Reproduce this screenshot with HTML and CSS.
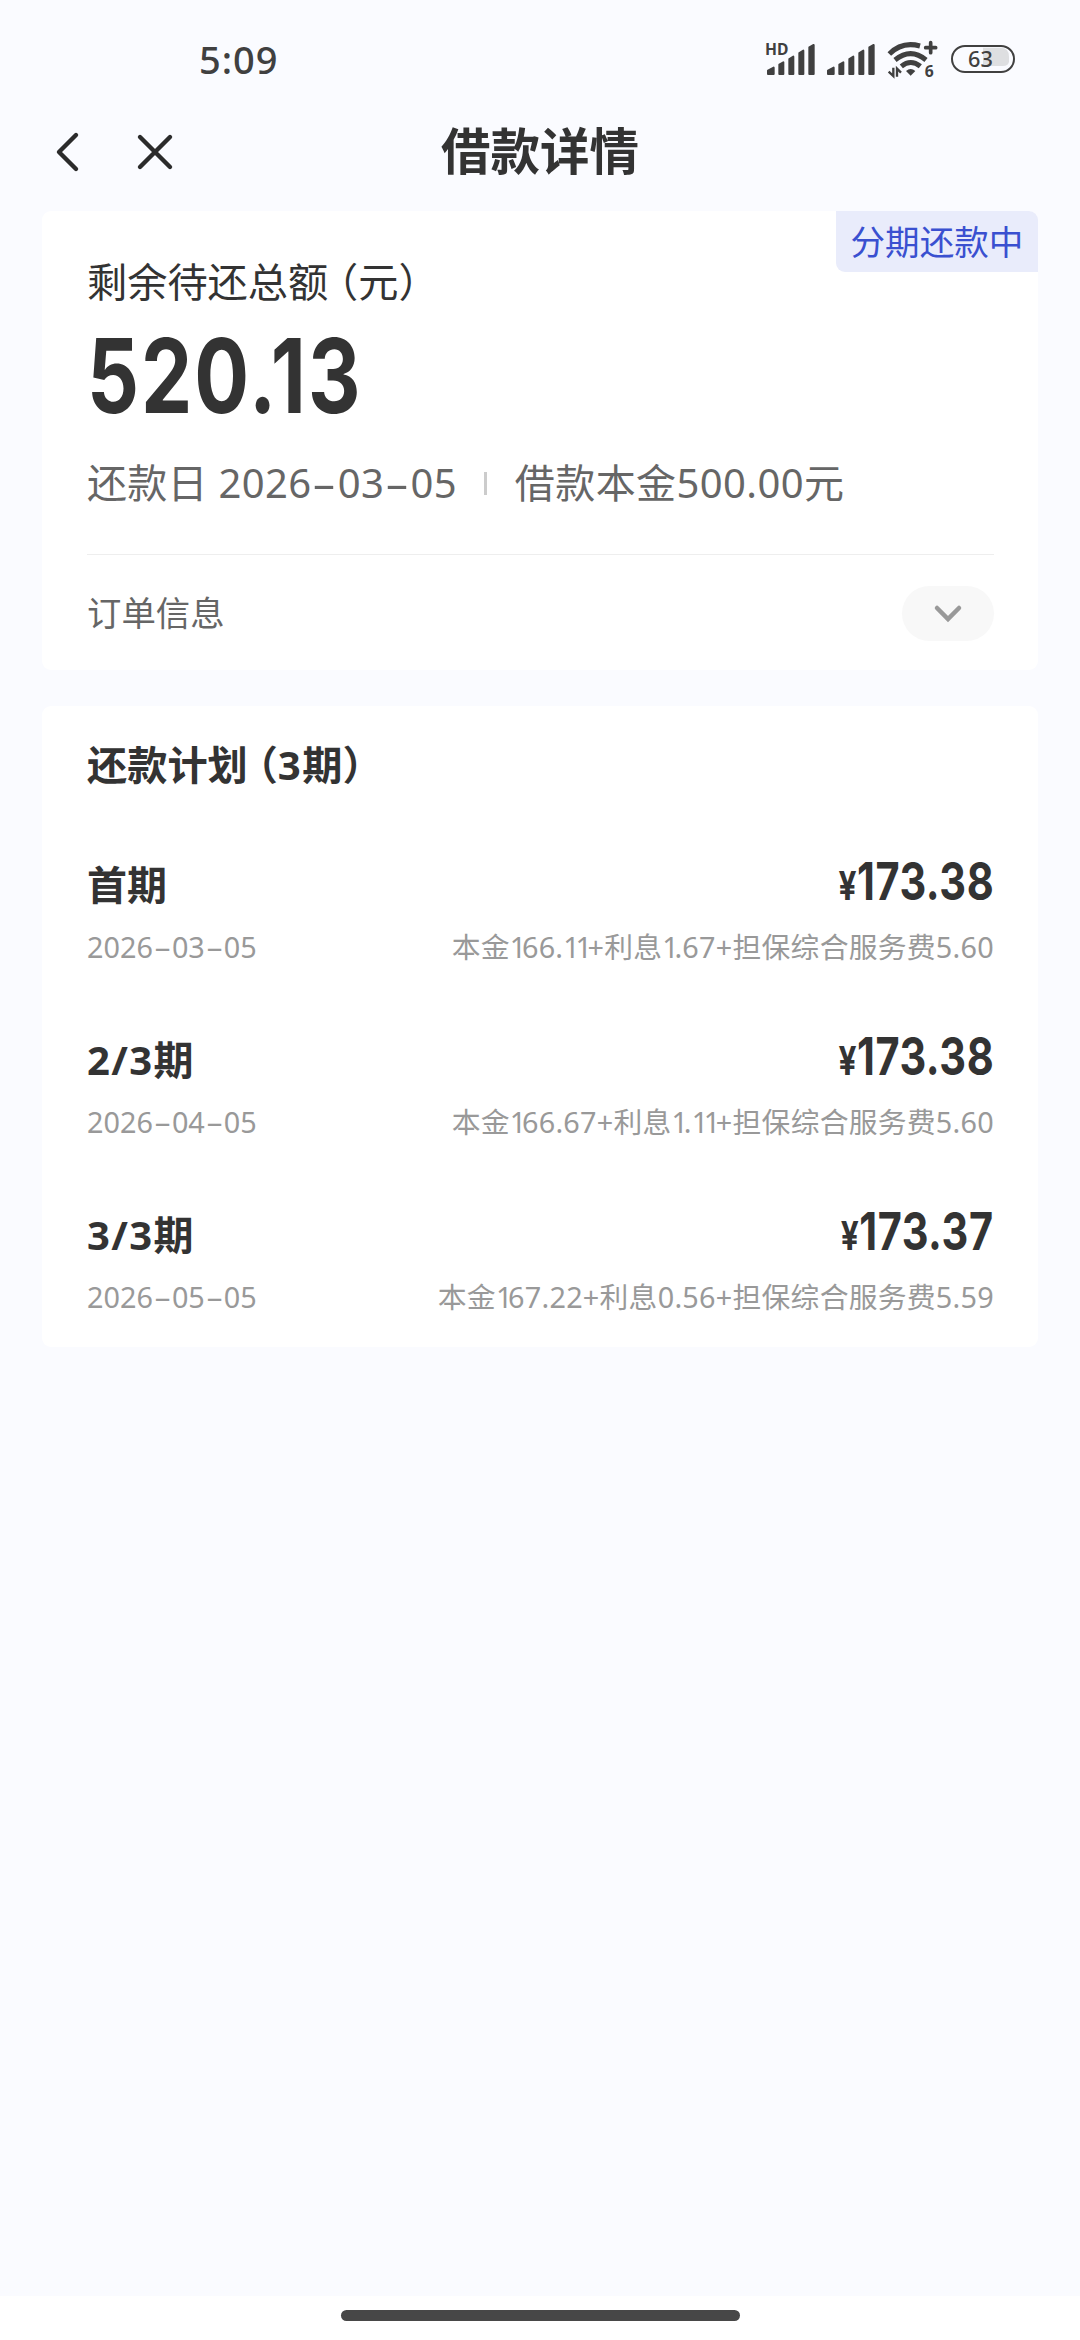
FILE: index.html
```html
<!DOCTYPE html>
<html lang="zh-CN">
<head>
<meta charset="utf-8">
<title>借款详情</title>
<link rel="stylesheet" href="styles.css">
</head>
<body>
<header class="status">
  <span class="clock">5:09</span>
  <div class="status-icons">
    <svg class="sig1" viewBox="75 60 150 120">
      <text x="75" y="105" class="hd">HD</text>
      <g class="bars"><path d="M84 152 101 143V162H84Z"/><path d="M118 134 130 127V162H118Z"/><path d="M148 117 160 110V162H148Z"/><path d="M178 99 190 92V162H178Z"/><path d="M208 82 221 75V162H208Z"/></g>
    </svg>
    <svg class="sig2" viewBox="261 60 144 120">
      <g class="bars"><path d="M264 152 281 143V162H264Z"/><path d="M298 134 310 127V162H298Z"/><path d="M328 117 340 110V162H328Z"/><path d="M358 99 370 92V162H358Z"/><path d="M388 82 401 75V162H388Z"/></g>
    </svg>
    <svg class="wifi" viewBox="444 60 150 120">
      <g class="arcs"><path d="M448 102Q486 63 540 78"/><path d="M465 120Q512 82 558 120"/><path d="M484 139Q512 116 541 139"/></g>
      <path d="M498 153Q512 141 526 153L512 167Z" class="solid"/>
      <path d="M572 68V98M557 83H587" class="plus"/>
      <path d="M460 143V168L446 155M471 170V146L483 158" class="updown"/>
      <text x="554" y="170" class="gen">6</text>
    </svg>
    <svg class="battery" viewBox="633 60 192 120">
      <path d="M729 83H781Q807 83 807 110V124Q807 138 788 138H729Z" class="level"/>
      <rect x="636" y="78" width="186" height="78" rx="39" class="case"/>
      <text x="684" y="142" class="pct">63</text>
    </svg>
  </div>
</header>
<nav class="nav">
  <div class="nav-icons">
    <svg class="back" viewBox="0 0 24 40"><path d="M21 3 4 20 21 37"/></svg>
    <svg class="close" viewBox="0 0 36 36"><path d="M3 3 33 33M33 3 3 33"/></svg>
  </div>
  <h1>借款详情</h1>
</nav>
<main>
  <section class="card summary">
    <span class="tag">分期还款中</span>
    <p class="label">剩余待还总额<span class="pl">（</span>元）</p>
    <p class="total"><span class="num">520.13</span></p>
    <p class="meta"><span class="due">还款日 2026<b class="dash">-</b>03<b class="dash">-</b>05</span><i class="sep"></i><span class="principal">借款本金500.00元</span></p>
    <div class="order">
      <span class="order-label">订单信息</span>
      <span class="pill"><svg viewBox="0 0 30 20"><path d="M4 4 15 15 26 4"/></svg></span>
    </div>
  </section>
  <section class="card plan">
    <h2>还款计划<span class="pl">（</span><span class="count">3</span>期）</h2>
    <article class="item">
      <div class="top"><h3>首期</h3><span class="num"><small>¥</small>173.38</span></div>
      <div class="sub"><span>2026<b class="dash">-</b>03<b class="dash">-</b>05</span><span class="detail">本金<i>1</i>66.<i>11</i>+利息<i>1</i>.67+担保综合服务费5.60</span></div>
    </article>
    <article class="item">
      <div class="top"><h3><span class="count">2/3</span>期</h3><span class="num"><small>¥</small>173.38</span></div>
      <div class="sub"><span>2026<b class="dash">-</b>04<b class="dash">-</b>05</span><span class="detail">本金<i>1</i>66.67+利息<i>1</i>.<i>11</i>+担保综合服务费5.60</span></div>
    </article>
    <article class="item">
      <div class="top"><h3><span class="count">3/3</span>期</h3><span class="num"><small>¥</small>173.37</span></div>
      <div class="sub"><span>2026<b class="dash">-</b>05<b class="dash">-</b>05</span><span class="detail">本金<i>1</i>67.22+利息0.56+担保综合服务费5.59</span></div>
    </article>
  </section>
</main>
<footer class="home"><span></span></footer>
</body>
</html>
```

FILE: styles.css
```css
* { box-sizing: border-box; margin: 0; padding: 0; }
body {
  width: 1080px; height: 2340px; overflow: hidden;
  display: flex; flex-direction: column;
  background: #fafbff; color: #333;
  font-family: "Noto Sans", "Noto Sans CJK SC", sans-serif;
}
svg { display: block; overflow: visible; }
.status { height: 120px; padding: 0 65px 0 199px; display: flex; justify-content: space-between; align-items: center; }
.clock { font-size: 38px; font-weight: 500; letter-spacing: 1px; line-height: 40px; color: #404040; padding-bottom: 3px; }
.status-icons { display: flex; height: 40px; fill: #404040; }
.status-icons svg { height: 40px; }
.sig1 { width: 50px; margin-right: 12px; }
.sig2 { width: 48px; margin-right: 13px; }
.wifi { width: 50px; margin-right: 13px; }
.battery { width: 64px; }
.bars { stroke: #404040; stroke-width: 6; stroke-linejoin: round; }
.hd { font: 700 47px "Noto Sans", sans-serif; }
.gen { font: 700 47px "Noto Sans", sans-serif; }
.pct { font: 500 65px "Noto Sans", sans-serif; }
.arcs { fill: none; stroke: #404040; stroke-width: 15; }
.plus { fill: none; stroke: #404040; stroke-width: 11; stroke-linecap: round; }
.updown { fill: none; stroke: #404040; stroke-width: 7; }
.level { fill: #dedfe1; }
.case { fill: none; stroke: #404040; stroke-width: 6; }

.nav { height: 91px; display: grid; grid-template-columns: 1fr auto 1fr; align-items: start; }
.nav-icons { display: flex; align-items: center; height: 63px; padding-left: 55px; gap: 58px; }
.nav-icons svg { fill: none; stroke: #2b2b2b; stroke-width: 4.4; stroke-linecap: round; stroke-linejoin: round; }
.back { width: 24px; height: 40px; }
.close { width: 36px; height: 36px; }
h1 { font-size: 49.5px; line-height: 62px; font-weight: 700; }

main { flex: 1; padding: 0 42px; display: flex; flex-direction: column; gap: 36px; }
.card { background: #fff; border-radius: 9px; padding: 0 44px 0 45px; position: relative; }
.summary { height: 459px; }
.tag {
  position: absolute; top: 0; right: 0; width: 202px; height: 61px;
  border-radius: 0 9px 0 9px; background: #e9ecfb; color: #3a50d0;
  font-size: 34.6px; line-height: 61px; text-align: center;
}
.label { padding-top: 41px; font-size: 40.2px; line-height: 60px; }
.pl { font-feature-settings: "halt"; margin-left: 10px; }
.num { display: inline-block; font-family: Inter, sans-serif; font-weight: 700; white-space: nowrap; }
.total { height: 127px; }
.total .num { font-size: 103px; line-height: 128px; letter-spacing: 2.6px; transform: scaleX(.79); transform-origin: left; }
.meta { display: flex; align-items: center; height: 88px; font-size: 40px; line-height: 60px; color: #666; }
.due { letter-spacing: .3px; }
.principal { letter-spacing: .4px; }
.dash { display: inline-block; width: .66em; text-align: center; font-weight: inherit; transform: scaleX(1.9); }
.sep { width: 3px; height: 23px; margin: 0 28px 0 27px; background: #ccc; }
.order {
  margin-top: 27px; border-top: 1px solid #eee; height: 118px;
  display: flex; align-items: center; justify-content: space-between;
  font-size: 34.4px; color: #666;
}
.order-label { padding-bottom: 5px; }
.pill { width: 92px; height: 55px; border-radius: 28px; background: #f8f8f8; display: grid; place-items: center; }
.pill svg { width: 30px; height: 20px; fill: none; stroke: #999; stroke-width: 4.5; stroke-linecap: round; }

.plan { height: 641px; padding-top: 29px; }
h2 { font-size: 40.2px; line-height: 60px; font-weight: 700; margin-bottom: 55px; }
.item { height: 175px; }
.top { display: flex; justify-content: space-between; height: 72px; }
h3 { font-size: 40px; line-height: 70px; font-weight: 700; }
.count { letter-spacing: 1.4px; }
.top .num { font-size: 52.5px; line-height: 62px; letter-spacing: .7px; transform: scaleX(.79); transform-origin: right; }
.top small { font-size: 40px; }
.sub { display: flex; justify-content: space-between; font-size: 28.8px; line-height: 50px; color: #999; }
.detail { letter-spacing: .25px; }
.detail i { font-style: normal; letter-spacing: -4.4px; }

.home { height: 44px; background: #fff; display: flex; justify-content: center; padding-top: 14px; }
.home span { width: 399px; height: 11px; border-radius: 6px; background: #474747; }
```
